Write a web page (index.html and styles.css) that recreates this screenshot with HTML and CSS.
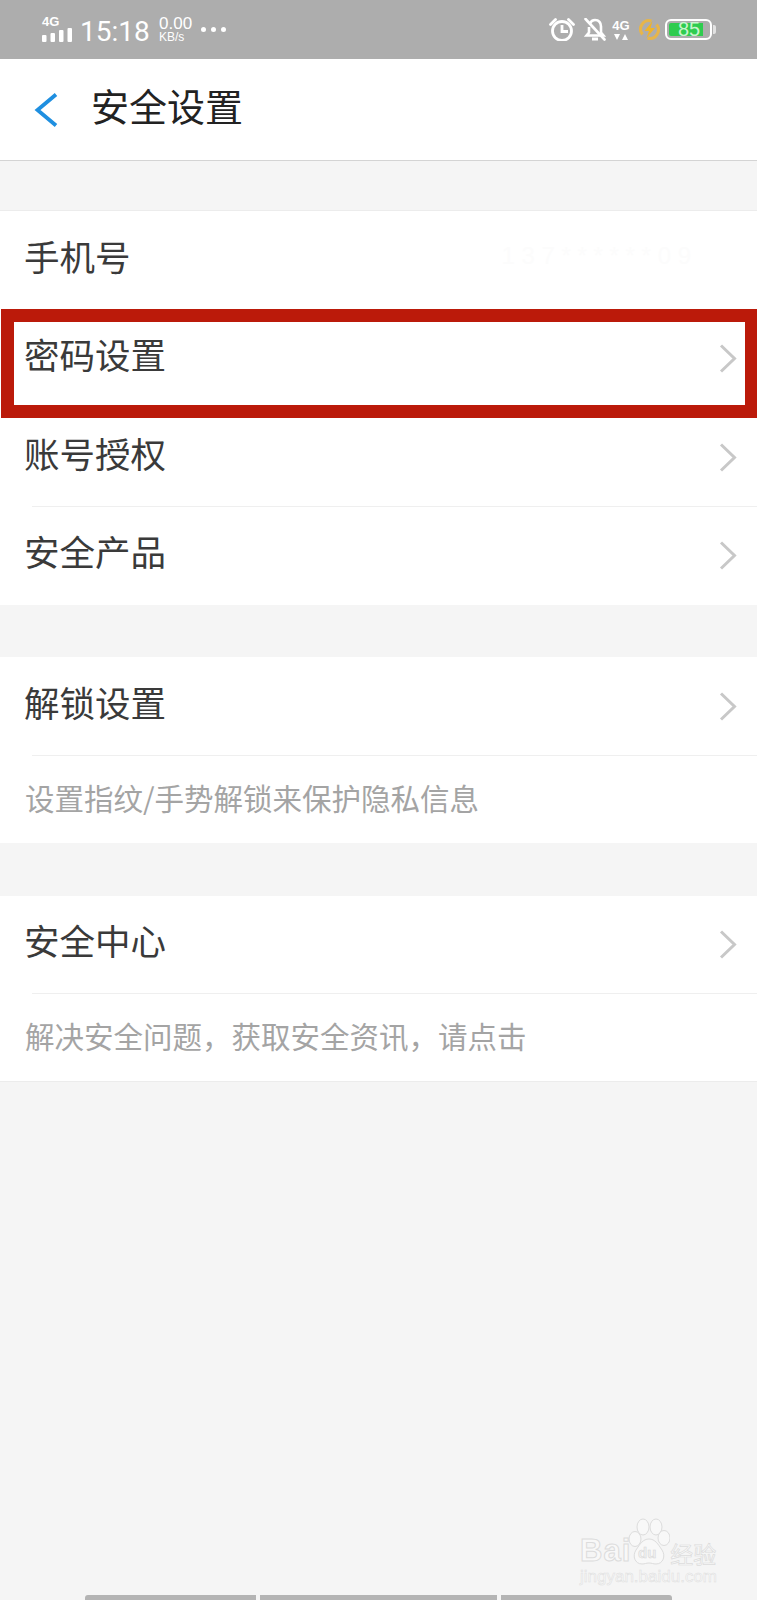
FILE: index.html
```html
<!DOCTYPE html>
<html lang="zh-CN">
<head>
<meta charset="utf-8">
<title>安全设置</title>
<link rel="stylesheet" href="styles.css">
</head>
<body>
<div class="screen">
  <header class="status">
    <div class="status-left">
      <div class="signal">
        <span class="signal-label">4G</span>
        <svg class="signal-bars" width="30" height="14" viewBox="0 0 30 14"><g fill="#fff"><rect x="0" y="7" width="4.500" height="7" rx="1"/><rect x="8.500" y="5" width="4.500" height="9" rx="1"/><rect x="17" y="2" width="4.500" height="12" rx="1"/><rect x="25.500" y="0" width="4.500" height="14" rx="1"/></g></svg>
      </div>
      <span class="time">15:18</span>
      <div class="speed"><span class="speed-num">0.00</span><span class="speed-unit">KB/s</span></div>
      <div class="dots"><i></i><i></i><i></i></div>
    </div>
    <div class="status-right">
      <svg class="ic-clock" width="26" height="23" viewBox="0 0 26 23" fill="none" stroke="#fff" stroke-width="2.800"><circle cx="13" cy="13" r="9.500"/><path d="M13 7V13.500H19"/><path d="M1.500 6.500 6.500 1.500M24.500 6.500 19.500 1.500" stroke-linecap="round"/></svg>
      <svg class="ic-bell" width="22" height="23" viewBox="0 0 22 23" fill="none" stroke="#fff" stroke-width="2.600"><path d="M6 5.500C7 3 9 2 11 2c4 0 6 3 6 6.500v6l2.500 3H2.500L5 14.500V9"/><path d="M8 21h6" stroke-width="3"/><path d="M1.500 1 20.500 21.500" stroke-linecap="round"/></svg>
      <div class="net"><span class="net-label">4G</span><svg width="14" height="7" viewBox="0 0 14 7" fill="#fff"><path d="M0 1h6L3 7zM8 7h6l-3-6z"/></svg></div>
      <svg class="ic-bolt" width="21" height="21" viewBox="0 0 21 21" fill="none"><path d="M3.500 15.500A8.500 8.500 0 0 1 12.500 2M17.500 5.500A8.500 8.500 0 0 1 8.500 19" stroke="#e6b54a" stroke-width="3"/><path d="M13.500 2 5.500 12h4.500L7.500 19 16 9h-4.500z" fill="#f0b429"/></svg>
      <div class="battery">
        <div class="battery-body"><div class="battery-fill"></div><span class="battery-num">85</span></div>
        <div class="battery-tip"></div>
      </div>
    </div>
  </header>

  <nav class="nav">
    <svg class="back" width="24" height="34" viewBox="0 0 24 34" fill="none"><path d="M22 1.500 3.500 17 22 32.500" stroke="#1f8fe0" stroke-width="3.800"/></svg>
    <h1 class="nav-title">安全设置</h1>
  </nav>

  <main class="content">
    <section class="group group-first">
      <div class="row"><span class="row-label">手机号</span><span class="ghost">1 3 7 * * * * * * 0 9</span></div>
      <div class="row"><span class="row-label">密码设置</span><svg class="chev" width="18" height="29" viewBox="0 0 18 29" fill="none"><path d="M2 1.500 15.500 14.500 2 27.500" stroke="#c8c8c8" stroke-width="3"/></svg></div>
      <div class="row row-line"><span class="row-label">账号授权</span><svg class="chev" width="18" height="29" viewBox="0 0 18 29" fill="none"><path d="M2 1.500 15.500 14.500 2 27.500" stroke="#c8c8c8" stroke-width="3"/></svg></div>
      <div class="row"><span class="row-label">安全产品</span><svg class="chev" width="18" height="29" viewBox="0 0 18 29" fill="none"><path d="M2 1.500 15.500 14.500 2 27.500" stroke="#c8c8c8" stroke-width="3"/></svg></div>
    </section>

    <section class="group">
      <div class="row row-line"><span class="row-label">解锁设置</span><svg class="chev" width="18" height="29" viewBox="0 0 18 29" fill="none"><path d="M2 1.500 15.500 14.500 2 27.500" stroke="#c8c8c8" stroke-width="3"/></svg></div>
      <div class="hint">设置指纹/手势解锁来保护隐私信息</div>
    </section>

    <section class="group group-last">
      <div class="row row-line"><span class="row-label">安全中心</span><svg class="chev" width="18" height="29" viewBox="0 0 18 29" fill="none"><path d="M2 1.500 15.500 14.500 2 27.500" stroke="#c8c8c8" stroke-width="3"/></svg></div>
      <div class="hint">解决安全问题，获取安全资讯，请点击</div>
    </section>
  </main>

  <div class="highlight"></div>

  <div class="watermark">
    <div class="wm-top">
      <span class="wm-brand">Bai</span>
      <svg class="wm-paw" width="42" height="50" viewBox="0 0 42 50" fill="#f8f8f8" stroke="#dcdcdc" stroke-width="1"><ellipse cx="7" cy="21" rx="6" ry="7.500"/><ellipse cx="15" cy="9" rx="6" ry="8"/><ellipse cx="28" cy="9" rx="6" ry="8"/><ellipse cx="36" cy="20" rx="6" ry="7.500"/><path d="M21 21c6 0 9 5 13 11 4 6 1 14-6 14-3 0-4-1-7-1s-4 1-7 1C7 46 4 38 8 32c4-6 7-11 13-11z"/></svg>
      <span class="wm-du">du</span>
      <span class="wm-cn">经验</span>
    </div>
    <div class="wm-url">jingyan.baidu.com</div>
  </div>

  <div class="tabbar"><i class="tab tab-a"></i><i class="tab tab-b"></i><i class="tab tab-c"></i></div>
</div>
</body>
</html>
```
FILE: styles.css
```css
* { box-sizing: border-box; }
html, body { margin: 0; padding: 0; }
body { background: #f5f5f5; font-family: "Noto Sans CJK SC", "Liberation Sans", sans-serif; }

.screen { position: relative; width: 757px; height: 1600px; overflow: hidden; background: #f5f5f5; }

.status { height: 59px; background: #adadad; color: #fff; display: flex; justify-content: space-between; align-items: center; padding: 0 41px 0 42px; font-family: "Liberation Sans", sans-serif; }
.status-left { display: flex; align-items: center; }
.status-right { display: flex; align-items: center; }

.signal { display: flex; flex-direction: column; width: 30px; }
.signal-label { font-size: 13px; line-height: 12px; font-weight: 700; margin-bottom: 0; margin-top: -2px; }
.signal-bars { display: block; }
.time { font-family: Roboto, sans-serif; font-weight: 400; font-size: 28px; line-height: 34px; margin-left: 8px; width: 70px; white-space: nowrap; position: relative; top: 2px; }
.speed { display: flex; flex-direction: column; margin-left: 9px; width: 33px; align-items: flex-start; position: relative; top: 0; }
.speed-num { font-size: 17px; line-height: 15px; }
.speed-unit { font-size: 12px; line-height: 13px; }
.dots { display: flex; gap: 5px; margin-left: 9px; }
.dots i { width: 5px; height: 5px; border-radius: 50%; background: #fff; }

.ic-clock { margin-right: 9px; }
.ic-bell { margin-right: 6px; }
.net { display: flex; flex-direction: column; align-items: center; width: 18px; margin-right: 9px; }
.net-label { font-size: 13px; line-height: 13px; font-weight: 700; margin-bottom: 1px; }
.ic-bolt { margin-right: 5px; }
.battery { display: flex; align-items: center; }
.battery-body { position: relative; width: 47px; height: 21px; border: 2px solid #fff; border-radius: 6px; display: flex; align-items: center; padding-left: 2px; }
.battery-fill { width: 34px; height: 13px; background: #2ecc4f; border-radius: 2px 0 0 2px; }
.battery-num { position: absolute; left: 11px; top: -2px; font-size: 20px; line-height: 21px; color: #c9f3cd; }
.battery-tip { width: 3px; height: 9px; margin-left: 1px; background: #e2e2e2; border-radius: 0 2px 2px 0; }

.nav { height: 102px; background: #fff; border-bottom: 1px solid #d4d4d4; display: flex; align-items: center; padding-left: 34px; }
.back { display: block; margin-right: 33px; }
.nav-title { margin: 0 0 9px; font-size: 38px; line-height: 50px; font-weight: 400; color: #222; }

.content { display: flex; flex-direction: column; padding-top: 49px; }
.group { background: #fff; margin-bottom: 53px; }
.group-first { border-top: 1px solid #ececec; margin-bottom: 52px; }
.group-last { border-bottom: 1px solid #ececec; }

.row { position: relative; height: 98.500px; display: flex; align-items: center; justify-content: space-between; padding: 0 20px 0 24px; }
.row-label { font-size: 35.500px; line-height: 48px; color: #3a3a3a; margin-bottom: 9px; }
.row-line::after { content: ""; position: absolute; left: 32px; right: 0; bottom: 0; height: 1px; background: #efefef; }
.ghost { font-family: "Liberation Sans", sans-serif; font-size: 24px; color: #fcfcfc; margin: 0 46px 9px 0; }
.chev { display: block; }

.hint { height: 87px; display: flex; align-items: center; padding: 0 0 5px 25px; font-size: 29.500px; color: #a4a4a4; }

.highlight { position: absolute; left: 1px; top: 309px; width: 756px; height: 109px; border: 13px solid #bb1a0a; border-right-width: 12px; }

.watermark { position: absolute; left: 580px; top: 1516px; width: 140px; display: flex; flex-direction: column; color: #f8f8f8; }
.wm-top { display: flex; align-items: flex-end; position: relative; height: 52px; }
.wm-brand { font-family: "Liberation Sans", sans-serif; font-weight: 700; font-size: 31px; line-height: 34px; letter-spacing: 1px; color: #f8f8f8; -webkit-text-stroke: 1px #dcdcdc; }
.wm-paw { position: relative; margin-left: -3px; flex: none; }
.wm-du { position: absolute; left: 58px; bottom: 7px; font-family: "Liberation Sans", sans-serif; font-weight: 700; font-size: 15px; line-height: 16px; color: #f0f0f0; -webkit-text-stroke: .5px #d6d6d6; }
.wm-cn { font-size: 23px; line-height: 30px; margin-left: 0; white-space: nowrap; color: #f8f8f8; -webkit-text-stroke: .7px #dcdcdc; }
.wm-url { font-family: "Liberation Sans", sans-serif; font-size: 17px; line-height: 20px; margin-top: -1px; white-space: nowrap; color: #f8f8f8; -webkit-text-stroke: .5px #dedede; }

.tabbar { position: absolute; left: 85px; bottom: 0; display: flex; gap: 4px; }
.tab { display: block; height: 5px; background: #b4b4b4; }
.tab-a { width: 171px; border-radius: 3px 0 0 0; }
.tab-b { width: 237px; }
.tab-c { width: 171px; border-radius: 0 3px 0 0; }
```
